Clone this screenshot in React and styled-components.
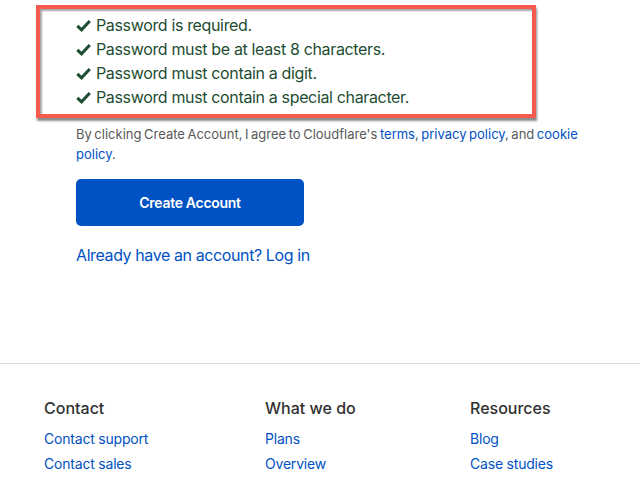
import React from "react";
import styled, { createGlobalStyle } from "styled-components";

const GlobalStyle = createGlobalStyle`
  html, body {
    margin: 0;
    padding: 0;
    background: #ffffff;
    font-family: "Inter", "Liberation Sans", sans-serif;
  }
`;

const Page = styled.div`
  width: 640px;
  height: 480px;
  overflow: hidden;
  display: flex;
  flex-direction: column;
`;

const Content = styled.div`
  display: flex;
  flex-direction: column;
  padding-top: 5px;
  height: 358px;
`;

const Highlight = styled.div`
  margin-left: 36px;
  border: 4px solid #f55a4e;
  padding: 4px 0 5px 36px;
  box-sizing: content-box;
  width: 456px;
  box-shadow: 1px 3px 2px rgba(0, 0, 0, 0.45),
    inset 2px 2px 2px rgba(0, 0, 0, 0.35);
`;

const CheckList = styled.ul`
  list-style: none;
  margin: 0;
  padding: 0;
`;

const CheckItem = styled.li`
  display: flex;
  align-items: center;
  gap: 5px;
  height: 24px;
  font-size: 16px;
  color: #1d4d30;
  letter-spacing: -0.35px;
`;

const Body = styled.div`
  padding-left: 76px;
  display: flex;
  flex-direction: column;
  align-items: flex-start;
`;

const Legal = styled.p`
  margin: 6px 0 0;
  width: 510px;
  font-size: 13px;
  line-height: 20px;
  color: #595959;
  word-spacing: -1.1px;
`;

const Link = styled.a`
  color: #0051c3;
  text-decoration: none;
`;

const Button = styled.button`
  margin-top: 15px;
  width: 228px;
  height: 47px;
  border: none;
  border-radius: 5px;
  background: #0051c3;
  color: #ffffff;
  font-family: inherit;
  font-size: 14px;
  font-weight: 600;
  letter-spacing: -0.3px;
  cursor: pointer;
`;

const LoginLine = styled.div`
  margin-top: 17px;
  font-size: 16px;
  line-height: 24px;
  color: #0051c3;
  letter-spacing: -0.4px;
`;

const Footer = styled.footer`
  border-top: 1px solid #dcdcdc;
  display: grid;
  grid-template-columns: 221px 205px 1fr;
  padding: 32px 0 0 44px;
`;

const Column = styled.div`
  display: flex;
  flex-direction: column;
`;

const Heading = styled.h4`
  margin: 0 0 6px;
  font-size: 16px;
  font-weight: 500;
  line-height: 24px;
  color: #313131;
`;

const FooterLink = styled.a`
  font-size: 14px;
  line-height: 25px;
  color: #0051c3;
  text-decoration: none;
  letter-spacing: -0.2px;
`;

const Check = () => (
  <svg width="15" height="13" viewBox="0 0 15 13">
    <path d="M1.3 6.8 L5.5 10.8 L13.8 2" fill="none" stroke="#1d4d30" strokeWidth="3" />
  </svg>
);

const rules = [
  "Password is required.",
  "Password must be at least 8 characters.",
  "Password must contain a digit.",
  "Password must contain a special character.",
];

const columns = [
  { title: "Contact", links: ["Contact support", "Contact sales"] },
  { title: "What we do", links: ["Plans", "Overview"] },
  { title: "Resources", links: ["Blog", "Case studies"] },
];

export default function App() {
  return (
    <Page>
      <GlobalStyle />
      <Content>
        <Highlight>
          <CheckList>
            {rules.map((r) => (
              <CheckItem key={r}>
                <Check />
                {r}
              </CheckItem>
            ))}
          </CheckList>
        </Highlight>
        <Body>
          <Legal>
            By clicking Create Account, I agree to Cloudflare's <Link href="#">terms</Link>,{" "}
            <Link href="#">privacy policy</Link>, and <Link href="#">cookie</Link>{" "}
            <Link href="#">policy</Link>.
          </Legal>
          <Button>Create Account</Button>
          <LoginLine>Already have an account? Log in</LoginLine>
        </Body>
      </Content>
      <Footer>
        {columns.map((c) => (
          <Column key={c.title}>
            <Heading>{c.title}</Heading>
            {c.links.map((l) => (
              <FooterLink key={l} href="#">
                {l}
              </FooterLink>
            ))}
          </Column>
        ))}
      </Footer>
    </Page>
  );
}
